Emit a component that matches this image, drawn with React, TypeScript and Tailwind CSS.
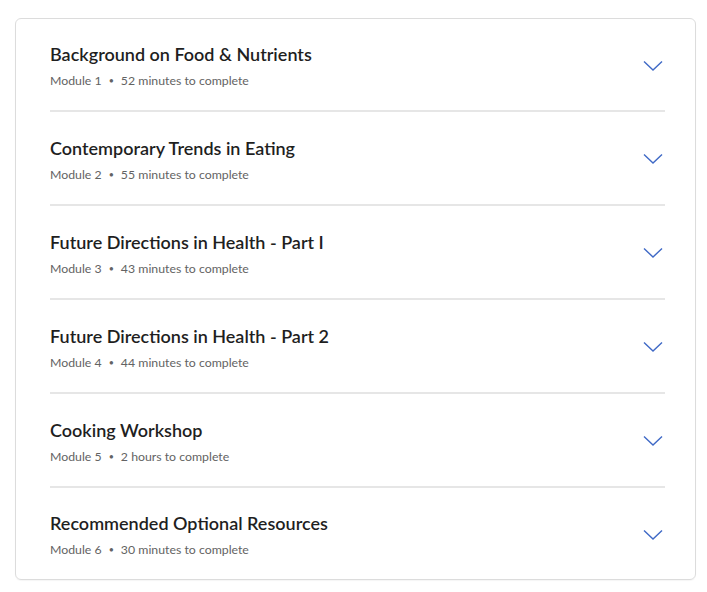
import React from "react";

const modules = [
  { title: "Background on Food & Nutrients", n: 1, time: "52 minutes to complete" },
  { title: "Contemporary Trends in Eating", n: 2, time: "55 minutes to complete" },
  { title: "Future Directions in Health - Part I", n: 3, time: "43 minutes to complete" },
  { title: "Future Directions in Health - Part 2", n: 4, time: "44 minutes to complete" },
  { title: "Cooking Workshop", n: 5, time: "2 hours to complete" },
  { title: "Recommended Optional Resources", n: 6, time: "30 minutes to complete" },
];

function Chevron() {
  return (
    <svg width="20" height="12" viewBox="0 0 20 12" fill="none" className="text-[#3f69c6]">
      <path d="M1 1.5 L10 10 L19 1.5" stroke="currentColor" strokeWidth="1.4" />
    </svg>
  );
}

export default function App() {
  return (
    <div className="min-h-screen bg-white pl-[15px] pt-[18px]" style={{ fontFamily: "Lato, 'Liberation Sans', sans-serif" }}>
      <div className="w-[681px] rounded-md border border-[#dcdcdc] pl-[34px] pr-[30px] shadow-[0_1px_1px_rgba(0,0,0,0.04)]">
        {modules.map((m, i) => (
          <div
            key={m.n}
            className={`flex items-center justify-between ${
              i === 0 ? "h-[93px]" : i === modules.length - 1 ? "h-[91px]" : "h-[94px]"
            } ${i < modules.length - 1 ? "border-b-2 border-[#e6e6e6]" : ""}`}
          >
            <div className="mt-[4px]">
              <div className="text-[18px] font-semibold leading-6 text-[#1f1f1f]">{m.title}</div>
              <div className="mt-[5px] flex items-center text-[12.3px] leading-5 text-[#636363]">
                <span>Module {m.n}</span>
                <span className="mx-[7px] text-[9px]">•</span>
                <span>{m.time}</span>
              </div>
            </div>
            <div className="mr-[2px] pt-[2px]">
              <Chevron />
            </div>
          </div>
        ))}
      </div>
    </div>
  );
}
